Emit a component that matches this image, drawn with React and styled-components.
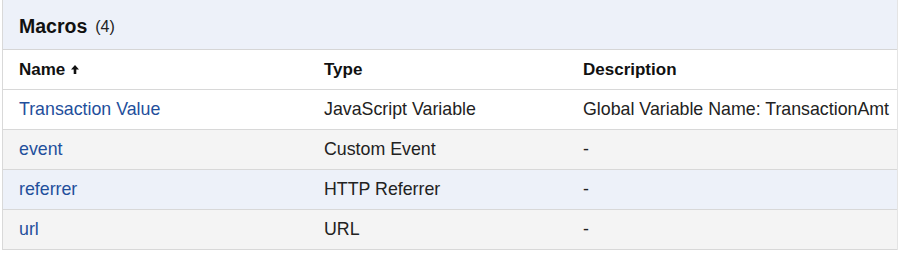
import React from "react";
import styled, { createGlobalStyle } from "styled-components";

const Global = createGlobalStyle`
  html, body { margin: 0; padding: 0; background: #fff; }
  body { font-family: "Liberation Sans", Arial, Helvetica, sans-serif; color: #222; }
`;

const Panel = styled.div`
  margin-left: 2px;
  width: 896px;
  border-left: 1px solid #d9d9d9;
  border-right: 1px solid #e4e4e4;
  box-sizing: border-box;
`;

const TitleBar = styled.div`
  height: 50px;
  background: #edf1f9;
  border-bottom: 1px solid #d6d6d6;
  display: flex;
  align-items: center;
  padding: 4px 0 0 16px;
  box-sizing: border-box;
`;

const Title = styled.span`
  font-size: 19.5px;
  font-weight: bold;
  color: #111;
`;

const Count = styled.span`
  font-size: 16px;
  margin-left: 8px;
  color: #222;
`;

const Row = styled.div`
  display: grid;
  grid-template-columns: 305px 259px 1fr;
  height: 40px;
  align-items: center;
  border-bottom: 1px solid #d8d8d8;
  box-sizing: border-box;
  background: ${(p) => p.$bg};
`;

const HeadCell = styled.div`
  padding-left: 16px;
  font-size: 17px;
  font-weight: bold;
  color: #111;
  display: flex;
  align-items: center;
  gap: 6px;
`;

const Cell = styled.div`
  padding-left: 16px;
  font-size: 17.8px;
  color: #222;
  white-space: nowrap;
`;

const LinkCell = styled(Cell)`
  color: #1f4f9c;
`;

const SortArrow = () => (
  <svg width="8" height="9" viewBox="0 0 8 9">
    <path d="M4 0 L8 4.5 L5.3 4.5 L5.3 9 L2.7 9 L2.7 4.5 L0 4.5 Z" fill="#111" />
  </svg>
);

const rows = [
  { name: "Transaction Value", type: "JavaScript Variable", desc: "Global Variable Name: TransactionAmt", bg: "#ffffff" },
  { name: "event", type: "Custom Event", desc: "-", bg: "#f4f4f4" },
  { name: "referrer", type: "HTTP Referrer", desc: "-", bg: "#edf1f9" },
  { name: "url", type: "URL", desc: "-", bg: "#f4f4f4" },
];

export default function App() {
  return (
    <>
      <Global />
      <Panel>
        <TitleBar>
          <Title>Macros</Title>
          <Count>(4)</Count>
        </TitleBar>
        <Row $bg="#ffffff">
          <HeadCell>
            Name <SortArrow />
          </HeadCell>
          <HeadCell>Type</HeadCell>
          <HeadCell>Description</HeadCell>
        </Row>
        {rows.map((r) => (
          <Row key={r.name} $bg={r.bg}>
            <LinkCell>{r.name}</LinkCell>
            <Cell>{r.type}</Cell>
            <Cell>{r.desc}</Cell>
          </Row>
        ))}
      </Panel>
    </>
  );
}
